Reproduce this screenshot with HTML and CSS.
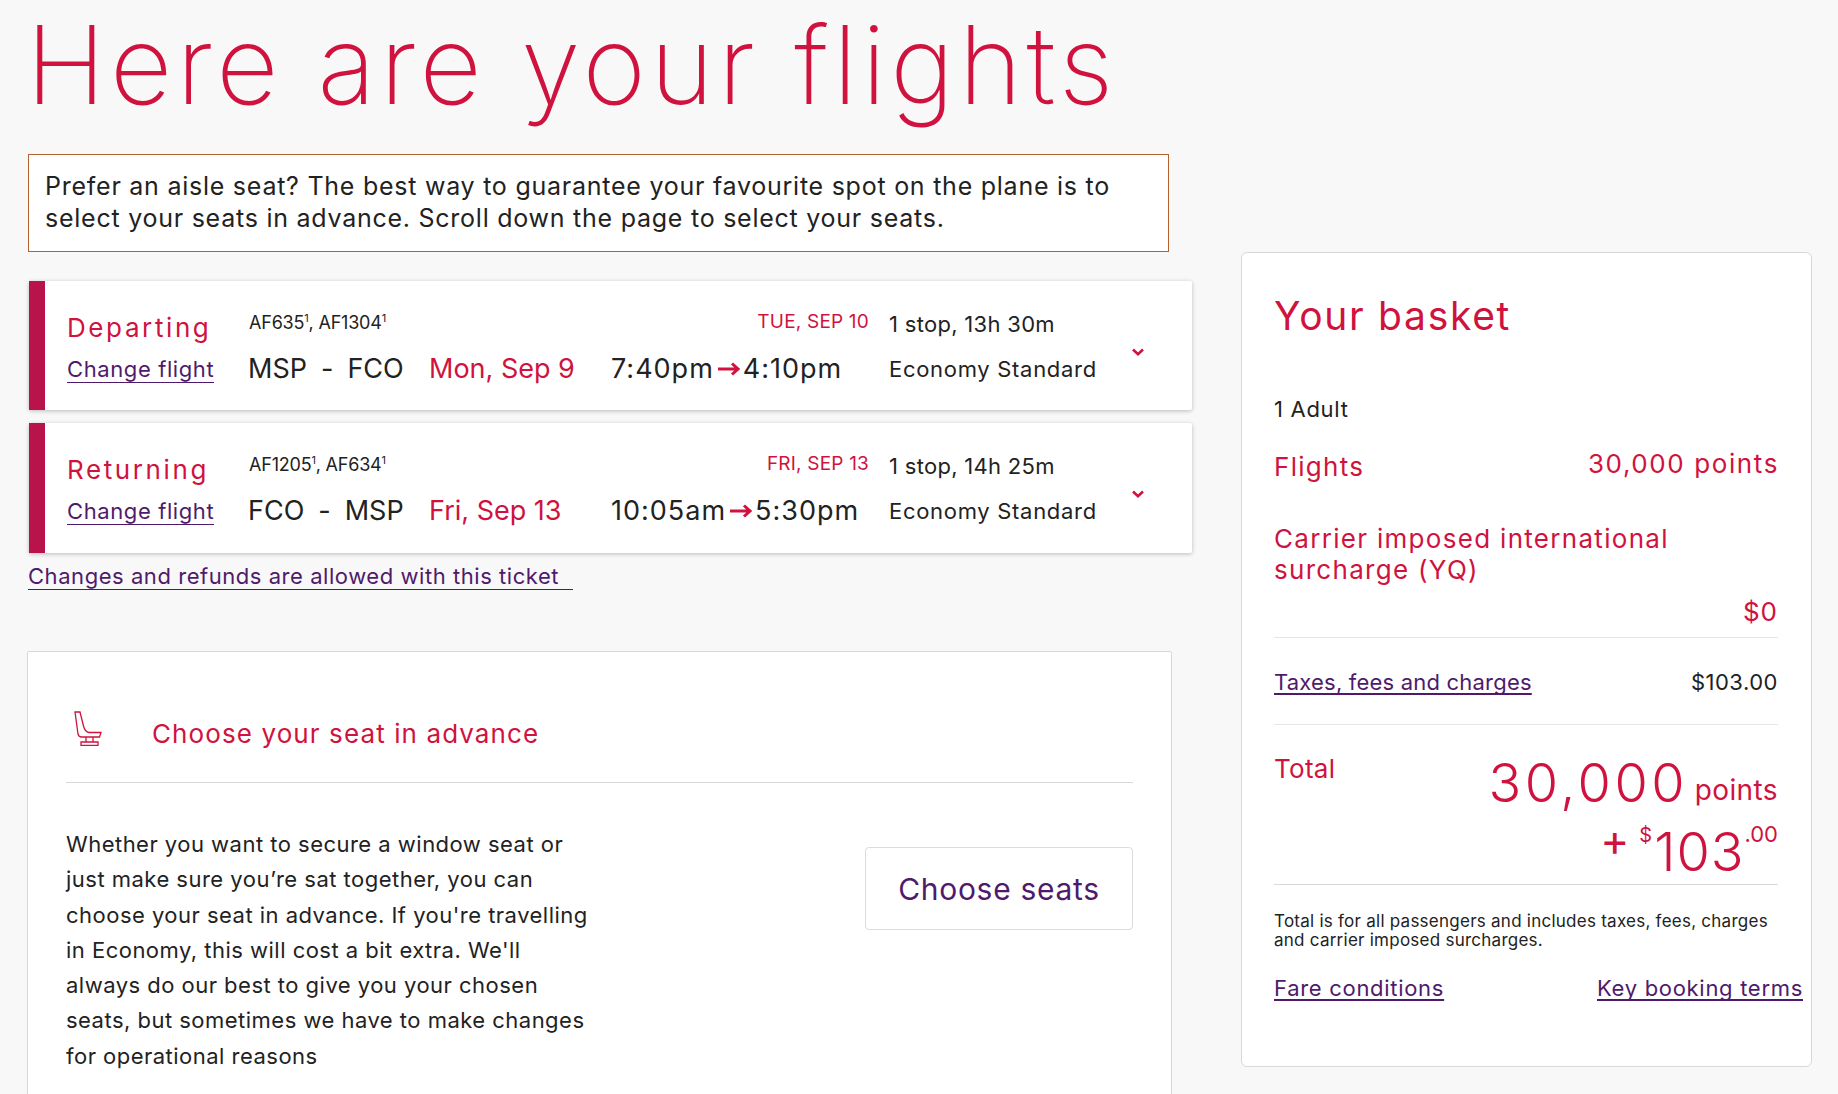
FILE: index.html
```html
<!DOCTYPE html>
<html lang="en">
<head>
<meta charset="utf-8">
<title>Here are your flights</title>
<link rel="stylesheet" href="styles.css">
</head>
<body>
<div class="page">
  <main class="main">
    <h1 class="title">Here are your flights</h1>
    <p class="notice">Prefer an aisle seat? The best way to guarantee your favourite spot on the plane is to select your seats in advance. Scroll down the page to select your seats.</p>

    <section class="flight">
      <div class="bar"></div>
      <div class="flight-grid">
        <h2 class="dir">Departing</h2>
        <div class="nums">AF635<sup>1</sup>, AF1304<sup>1</sup></div>
        <div class="arrive">TUE, SEP 10</div>
        <div class="stops">1 stop, 13h 30m</div>
        <div class="change"><a class="link" href="#">Change flight</a></div>
        <div class="route"><span>MSP</span><span>-</span><span>FCO</span></div>
        <div class="date">Mon, Sep 9</div>
        <div class="times">7:40pm<svg class="arrow" viewBox="0 0 23 14"><path d="M1 7H21M15 1.5L21 7L15 12.5" fill="none" stroke="#d0123e" stroke-width="3"/></svg>4:10pm</div>
        <div class="cabin">Economy Standard</div>
      </div>
      <svg class="chev" viewBox="0 0 12 8"><path d="M1 1.5L6 6.2L11 1.5" fill="none" stroke="#d0123e" stroke-width="2.6"/></svg>
    </section>

    <section class="flight">
      <div class="bar"></div>
      <div class="flight-grid">
        <h2 class="dir">Returning</h2>
        <div class="nums">AF1205<sup>1</sup>, AF634<sup>1</sup></div>
        <div class="arrive">FRI, SEP 13</div>
        <div class="stops">1 stop, 14h 25m</div>
        <div class="change"><a class="link" href="#">Change flight</a></div>
        <div class="route"><span>FCO</span><span>-</span><span>MSP</span></div>
        <div class="date">Fri, Sep 13</div>
        <div class="times">10:05am<svg class="arrow" viewBox="0 0 23 14"><path d="M1 7H21M15 1.5L21 7L15 12.5" fill="none" stroke="#d0123e" stroke-width="3"/></svg>5:30pm</div>
        <div class="cabin">Economy Standard</div>
      </div>
      <svg class="chev" viewBox="0 0 12 8"><path d="M1 1.5L6 6.2L11 1.5" fill="none" stroke="#d0123e" stroke-width="2.6"/></svg>
    </section>

    <div class="refund"><a class="link refund-link" href="#">Changes and refunds are allowed with this ticket</a></div>

    <section class="seat-card">
      <header class="seat-head">
        <svg class="seat-icon" viewBox="0 0 28 35"><path d="M1 1H6L9.500 15C10.500 19 12 21 15 21.500H27L25.500 26H7.500C5.500 26 4.500 25 4 23Z M12 26H19V31 M12 26V31 M7 31H24V34.500H7Z" fill="none" stroke="#d0123e" stroke-width="1.300"/></svg>
        <h2 class="seat-title">Choose your seat in advance</h2>
      </header>
      <div class="seat-body">
        <p class="seat-text">Whether you want to secure a window seat or just make sure you’re sat together, you can choose your seat in advance. If you're travelling in Economy, this will cost a bit extra. We'll always do our best to give you your chosen seats, but sometimes we have to make changes for operational reasons</p>
        <button class="seat-btn" type="button">Choose seats</button>
      </div>
    </section>
  </main>

  <aside class="basket">
    <h2 class="basket-title">Your basket</h2>
    <div class="adult">1 Adult</div>
    <div class="row flights-row"><span class="flights-label">Flights</span><span>30,000 points</span></div>
    <div class="carrier">Carrier imposed international surcharge (YQ)</div>
    <div class="zero">$0</div>
    <div class="row taxes"><a class="blink" href="#">Taxes, fees and charges</a><span class="tax-val">$103.00</span></div>
    <div class="total">
      <div class="total-label">Total</div>
      <div class="total-vals">
        <div class="pts"><span class="big big-pts">30,000</span> <span class="pts-word">points</span></div>
        <div class="cash"><span class="plus">+</span><span class="dollar">$</span><span class="big big-cash">103</span><span class="cents">.00</span></div>
      </div>
    </div>
    <p class="fine">Total is for all passengers and includes taxes, fees, charges and carrier imposed surcharges.</p>
    <div class="row foot"><a class="blink" href="#">Fare conditions</a><a class="blink" href="#">Key booking terms</a></div>
  </aside>
</div>
</body>
</html>
```
FILE: styles.css
```css
html, body { margin: 0; padding: 0; height: 1094px; overflow: hidden; background: #f8f8f8; }
body { font-family: Inter, "Liberation Sans", sans-serif; color: #222; font-weight: 400; }
h1, h2, p { margin: 0; font-weight: 400; }
a { color: #4f1a6b; text-decoration: none; }

.page { display: flex; align-items: flex-start; }
.main { width: 1171px; margin-left: 28px; flex: none; }

.title { font-size: 108px; font-weight: 200; line-height: 130px; color: #d0123e; margin-left: -2px; height: 154px; letter-spacing: 4.4px; white-space: nowrap; }

.notice { width: 1107px; height: 65px; padding: 15px 16px 16px; border: 1px solid #b5602f; background: #fff; font-size: 25px; line-height: 32px; letter-spacing: .75px; }

.flight { display: flex; position: relative; width: 1163px; margin-left: 1px; height: 129px; background: #fff; border-radius: 2px; box-shadow: 0 1px 4px rgba(0,0,0,.25); margin-top: 29px; }
.flight + .flight { margin-top: 13px; height: 130px; }
.bar { width: 16px; background: #b9134c; flex: none; }
.flight-grid { display: grid; grid-template-columns: 181px 181px 181px 278px 1fr; grid-template-rows: 52px 30px; margin: 21px 0 0 23px; flex: 1; }
.dir { grid-column: 1; font-size: 26px; line-height: 30px; color: #d0123e; padding-top: 11px; letter-spacing: 2.6px; margin-left: -1px; }
.nums { grid-column: 2; font-size: 18px; line-height: 22px; padding-top: 10px; letter-spacing: -.2px; }
.nums sup { font-size: 11px; line-height: 0; vertical-align: 7px; }
.arrive { grid-column: 3 / 5; font-size: 19px; line-height: 22px; letter-spacing: .2px; color: #d0123e; text-align: right; padding: 9px 20px 0 0; }
.stops { grid-column: 5; font-size: 22px; line-height: 26px; padding-top: 9px; letter-spacing: .3px; }
.change { font-size: 22px; line-height: 30px; letter-spacing: .6px; margin-left: -1px; }
.cabin { font-size: 22px; line-height: 30px; letter-spacing: .7px; }
.route { display: flex; gap: 14px; font-size: 27px; line-height: 30px; margin-left: -1px; }
.date { font-size: 27px; line-height: 30px; color: #d0123e; margin-left: -1px; }
.times { display: flex; align-items: center; font-size: 27px; line-height: 30px; letter-spacing: 1px; }
.arrow { width: 23px; height: 14px; margin: 0 3px; flex: none; }
.link { border-bottom: 1px solid #4f1a6b; }
.chev { position: absolute; left: 1103px; top: 67px; width: 12px; height: 8px; }

.refund { margin-top: 9px; height: 28px; font-size: 22px; line-height: 28px; letter-spacing: .55px; }
.refund-link { padding-right: 14px; }

.seat-card { width: 1067px; margin-top: 61px; padding: 0 38px 200px; background: #fff; border: 1px solid #d8d8d8; border-radius: 2px; margin-left: -1px; }
.seat-head { display: flex; align-items: center; height: 130px; border-bottom: 1px solid #d8d8d8; }
.seat-icon { width: 28px; height: 35px; margin: 22px 50px 0 8px; flex: none; }
.seat-title { font-size: 26px; color: #d0123e; padding-top: 33px; letter-spacing: 1.1px; }
.seat-body { display: flex; justify-content: space-between; align-items: flex-start; padding-top: 44px; }
.seat-text { width: 524px; font-size: 22px; line-height: 35.300px; letter-spacing: .48px; }
.seat-btn { width: 268px; height: 83px; margin-top: 20px; background: #fff; border: 1px solid #dcdcdc; border-radius: 4px; font: inherit; font-size: 30px; letter-spacing: .7px; color: #4f1a6b; padding: 0; }

.basket { width: 504px; height: 813px; margin: 252px 0 0 42px; padding: 0 33px 0 32px; background: #fff; border: 1px solid #d8d8d8; border-radius: 6px; flex: none; }
.basket-title { font-size: 39px; line-height: 48px; color: #d0123e; padding-top: 39px; letter-spacing: 1.7px; }
.adult { font-size: 22px; line-height: 28px; margin-top: 55px; letter-spacing: .7px; }
.row { display: flex; justify-content: space-between; }
.flights-row { font-size: 26px; line-height: 32px; color: #d0123e; margin-top: 25px; letter-spacing: 1.6px; margin-right: -1px; }
.flights-label { padding-top: 3px; letter-spacing: 1.3px; }
.carrier { font-size: 26px; line-height: 31px; color: #d0123e; margin-top: 40px; letter-spacing: 1.3px; }
.zero { font-size: 26px; line-height: 30px; color: #d0123e; text-align: right; margin-top: 12px; padding-bottom: 10px; border-bottom: 1px solid #e6e6e6; letter-spacing: 1px; }
.taxes { font-size: 22px; line-height: 28px; padding: 30px 0 28px; border-bottom: 1px solid #e6e6e6; letter-spacing: .2px; }
.tax-val { letter-spacing: .5px; }
.blink { text-decoration: underline; text-underline-offset: 3px; text-decoration-skip-ink: none; }
.total { display: flex; justify-content: space-between; height: 159px; border-bottom: 1px solid #d8d8d8; color: #d0123e; }
.total-label { font-size: 26px; line-height: 30px; padding-top: 29px; letter-spacing: .3px; }
.total-vals { text-align: right; padding-top: 25px; }
.big { font-size: 54px; font-weight: 300; line-height: 66px; }
.big-pts { letter-spacing: 3.5px; }
.big-cash { letter-spacing: 1px; }
.pts-word { font-size: 28px; margin-left: 2px; letter-spacing: .4px; vertical-align: 2px; }
.pts { height: 69px; line-height: 66px; }
.cash { display: flex; justify-content: flex-end; align-items: flex-start; line-height: 66px; }
.plus { font-size: 44px; font-weight: 400; line-height: 42px; margin-right: 10px; }
.dollar { font-size: 20px; line-height: 32px; margin-right: 2px; }
.cents { font-size: 22px; line-height: 31px; }
.fine { font-size: 17px; line-height: 19px; margin-top: 27px; letter-spacing: .25px; }
.foot { font-size: 22px; line-height: 28px; margin-top: 24px; margin-right: -25px; letter-spacing: .7px; }
```
